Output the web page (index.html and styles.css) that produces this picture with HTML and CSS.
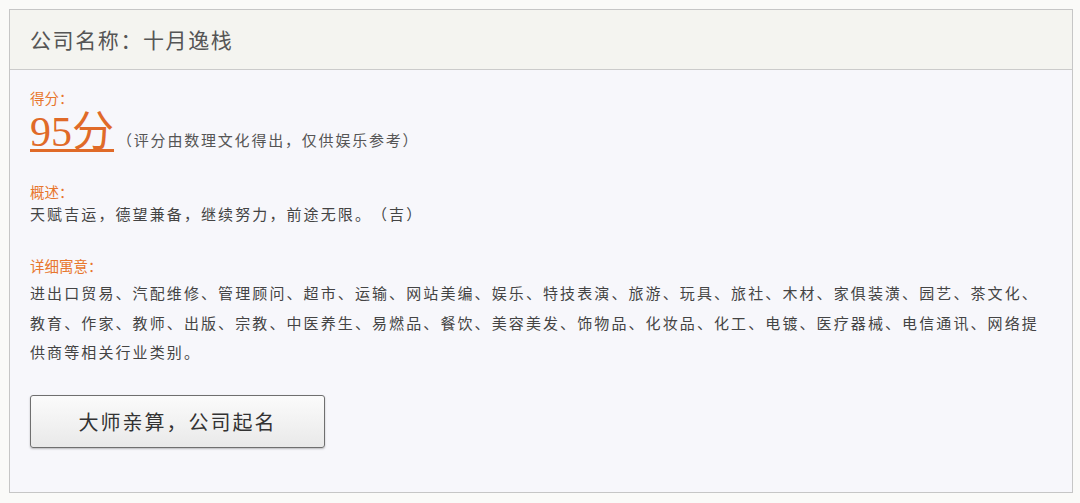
FILE: index.html
```html
<!DOCTYPE html>
<html lang="zh-CN">
<head>
    <meta charset="UTF-8">
    <meta name="viewport" content="width=device-width, initial-scale=1.0">
    <title>公司名称测试</title>
    <link rel="stylesheet" href="styles.css">
</head>
<body>
    <div class="result-card">
        <div class="card-head">公司名称：十月逸栈</div>
        <div class="card-body">
            <div class="label">得分：</div>
            <div class="score-row">
                <span class="score">95分</span>
                <span class="note">（评分由数理文化得出，仅供娱乐参考）</span>
            </div>

            <div class="label label-gap">概述：</div>
            <p class="summary">天赋吉运，德望兼备，继续努力，前途无限。（吉）</p>

            <div class="label label-gap2">详细寓意：</div>
            <p class="detail">进出口贸易、汽配维修、管理顾问、超市、运输、网站美编、娱乐、特技表演、旅游、玩具、旅社、木材、家俱装潢、园艺、茶文化、教育、作家、教师、出版、宗教、中医养生、易燃品、餐饮、美容美发、饰物品、化妆品、化工、电镀、医疗器械、电信通讯、网络提供商等相关行业类别。</p>

            <button class="master-btn" type="button">大师亲算，公司起名</button>
        </div>
    </div>
</body>
</html>
```

FILE: styles.css
```css
body {
    margin: 0;
    padding: 9px;
    background-color: #fafaf8;
    font-family: "Noto Sans CJK SC", "Liberation Sans", sans-serif;
    color: #444;
    text-spacing-trim: space-all;
}

.result-card {
    width: 1062px;
    height: 482px;
    border: 1px solid #c6c6c6;
    background-color: #f7f7fb;
}

.card-head {
    height: 59px;
    line-height: 59px;
    padding-left: 20px;
    background-color: #f4f4f0;
    border-bottom: 1px solid #cbcbcb;
    font-size: 21px;
    letter-spacing: 1.6px;
    color: #555;
}

.card-body {
    padding: 18px 20px 0 20px;
}

.label {
    font-size: 14.5px;
    line-height: 20px;
    color: #e8762c;
}

.label-gap {
    margin-top: 26px;
}

.label-gap2 {
    margin-top: 30px;
}

.score-row {
    display: flex;
    align-items: baseline;
    height: 48px;
}

.score {
    font-family: "Liberation Serif", "Noto Sans CJK SC", serif;
    font-size: 42px;
    line-height: 48px;
    color: #e06a28;
    text-decoration: underline;
    text-decoration-thickness: 3px;
    text-underline-offset: 3px;
}

.note {
    font-size: 15px;
    letter-spacing: 1.8px;
    color: #555;
    margin-left: 3px;
}

.summary,
.detail {
    margin: 0;
    font-size: 15px;
    letter-spacing: 2.1px;
    color: #444;
}

.summary {
    line-height: 24px;
}

.detail {
    width: 1020px;
    line-height: 29.5px;
    margin-top: 2px;
}

.master-btn {
    display: block;
    margin-top: 28px;
    width: 295px;
    height: 53px;
    font-family: "Noto Sans CJK SC", sans-serif;
    font-size: 20px;
    letter-spacing: 2px;
    color: #333;
    background: linear-gradient(#fbfbfb, #e9e9e9);
    border: 1px solid #6f6f6f;
    border-radius: 3px;
    box-shadow: 0 1px 2px rgba(0, 0, 0, 0.25);
    cursor: pointer;
    text-spacing-trim: space-all;
}

.master-btn:hover {
    background: #eee;
}
```
